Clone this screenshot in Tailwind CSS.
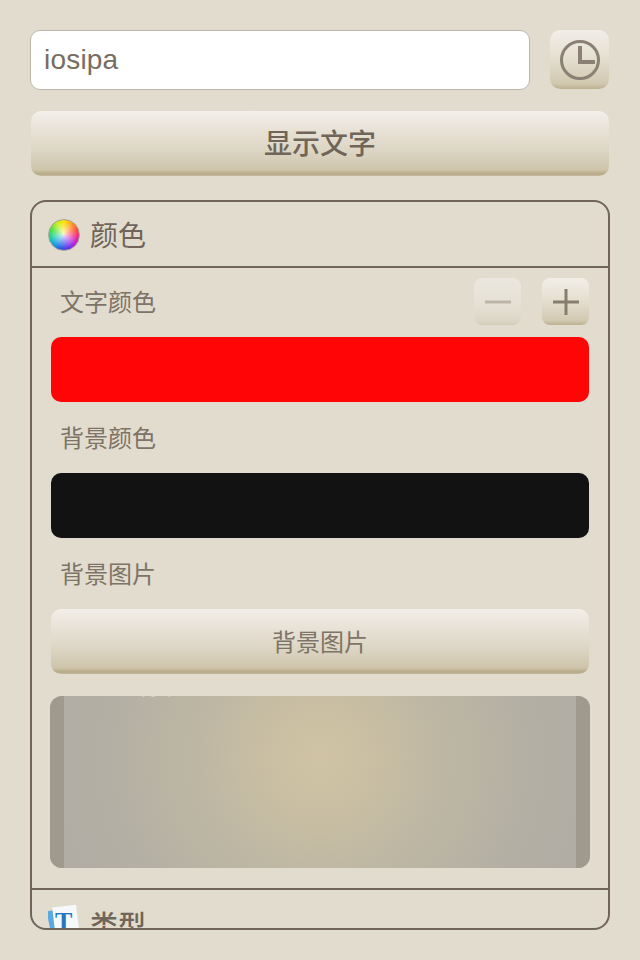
<!DOCTYPE html>
<html lang="zh">
<head>
<meta charset="utf-8">
<script src="https://cdn.jsdelivr.net/npm/@tailwindcss/browser@4"></script>
</head>
<body class="m-0 w-[640px] h-[960px] overflow-hidden bg-[#e2dccf] font-['Liberation_Sans','Noto_Sans_CJK_SC',sans-serif] text-[#706558]">
<main class="px-[30px] pt-[30px]">
  <div class="flex gap-[20px]">
    <div class="flex h-[60px] w-[500px] items-center rounded-[10px] border border-[#bdb8ae] bg-white pl-[13px] text-[28px] tracking-[0.2px] text-[#786d60]">iosipa</div>
    <button class="flex h-[59px] w-[59px] items-center justify-center rounded-[10px] bg-[linear-gradient(#f2eee8_0%,#e6e0d2_45%,#d2c9b1_90%,#bcb08f_100%)]">
      <svg width="44" height="44" viewBox="0 0 44 44" fill="none" stroke="#8a8073"><circle cx="22" cy="22" r="18.5" stroke-width="3"/><path d="M22 8V24H37" stroke-width="4"/></svg>
    </button>
  </div>
  <button class="mt-[21px] ml-px block h-[65px] w-[578px] rounded-[10px] bg-[linear-gradient(#f3efea_0%,#e8e2d7_28%,#ddd6c5_60%,#cfc5ab_90%,#b7aa88_97%,#c4b99e_100%)] pt-[2px] text-[28px] font-medium">显示文字</button>
  <section class="mt-[24px] h-[730px] w-[580px] overflow-hidden rounded-[16px] border-2 border-[#706558]">
    <header class="flex h-[64px] items-center gap-[10px] pt-[2px] pl-[16px] text-[28px]">
      <span class="h-[32px] w-[32px] rounded-full border border-[#a8a294] bg-[radial-gradient(#ffffffd0,#ffffff00_65%),conic-gradient(#ffe000,#ffa020,#ff5030,#f02090,#b020e0,#6030f0,#2060e0,#10a0e0,#20d0a0,#50e040,#c0f020,#ffe000)]"></span>
      <h2 class="pt-[4px]">颜色</h2>
    </header>
    <div class="border-y-2 border-[#706558] px-[19px] pt-[10px] pb-[20px]">
      <div class="flex h-[47px] items-center justify-between pl-[9px]">
        <span class="pt-[2px] text-[24px] text-[#7d7366]">文字颜色</span>
        <div class="flex gap-[21px]">
          <button class="flex h-[47px] w-[47px] items-center justify-center rounded-[8px] bg-[linear-gradient(#ebe7df_0%,#e5e0d4_60%,#dcd5c5_93%,#d3cbb7_100%)]">
            <svg width="28" height="28" viewBox="0 0 28 28" stroke="#bdb6a7" stroke-width="3"><path d="M1 14H27"/></svg>
          </button>
          <button class="flex h-[47px] w-[47px] items-center justify-center rounded-[8px] bg-[linear-gradient(#f2eee8_0%,#e6e0d2_45%,#d2c9b1_90%,#bcb08f_100%)]">
            <svg width="28" height="28" viewBox="0 0 28 28" stroke="#877d6f" stroke-width="3"><path d="M1 14H27M14 1V27"/></svg>
          </button>
        </div>
      </div>
      <div class="mt-[12px] h-[65px] rounded-[10px] bg-[#ff0505]"></div>
      <div class="flex h-[71px] items-center pt-[2px] pl-[9px] text-[24px] text-[#7d7366]">背景颜色</div>
      <div class="h-[65px] rounded-[10px] bg-[#121212]"></div>
      <div class="flex h-[71px] items-center pt-[2px] pl-[9px] text-[24px] text-[#7d7366]">背景图片</div>
      <button class="block h-[65px] w-full rounded-[10px] bg-[linear-gradient(#f3efea_0%,#e8e2d7_28%,#ddd6c5_60%,#cfc5ab_90%,#b7aa88_97%,#c4b99e_100%)] pt-[2px] text-[24px] text-[#7d7366]">背景图片</button>
      <div class="relative mt-[22px] -mx-px flex h-[172px] justify-between overflow-hidden rounded-[12px] bg-[radial-gradient(circle_at_50%_36%,#cfc3a4_0px,#cabfa3_50px,#beb7a3_120px,#b4b0a4_200px,#b1ada4_260px)]">
        <span class="w-[14px] bg-[#9e9a8e]"></span>
        <span class="w-[14px] bg-[#9e9a8e]"></span>
        <span class="absolute left-[88px] top-[-26px] text-[22px] text-white/70">背景</span>
        <span class="absolute left-[249px] top-[-24px] text-[20px] text-white/70">图片</span>
      </div>
    </div>
    <header class="flex h-[64px] items-center gap-[10px] pl-[16px] text-[28px]">
      <svg class="-mt-[4px] h-[32px] w-[32px] shrink-0" viewBox="0 0 32 32">
        <rect x="1" y="5" width="22" height="28" fill="#5aa9e0" transform="rotate(-12 12 18)"/>
        <rect x="6" y="2" width="24" height="32" fill="#f6f8fa" transform="rotate(-7 18 18)"/>
        <text x="7" y="26" font-family="Liberation Serif" font-weight="700" font-size="26" fill="#2877bd">T</text>
      </svg>
      <h2 class="pt-[10px] font-medium">类型</h2>
    </header>
  </section>
</main>
</body>
</html>
